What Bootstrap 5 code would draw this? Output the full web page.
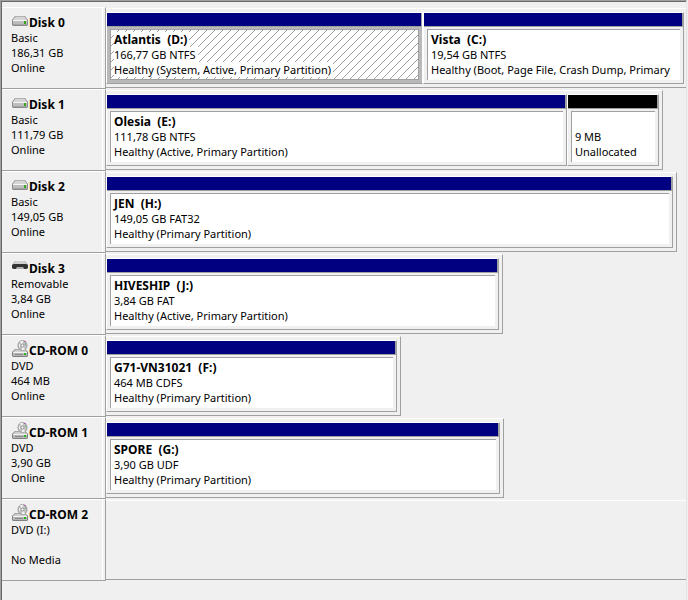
<!DOCTYPE html>
<html lang="en">
<head>
<meta charset="utf-8">
<meta name="viewport" content="width=device-width, initial-scale=1">
<title>Disk Management</title>
<link href="https://cdn.jsdelivr.net/npm/bootstrap@5.3.0/dist/css/bootstrap.min.css" rel="stylesheet">
<style>
  :root { --face: #f0f0f0; --shade: #a0a0a0; --navy: #000080; }
  body { background: var(--face); color: #000; font: 11px/15px "Noto Sans", "Open Sans", sans-serif; }
  .disk-view { border-top: 1px solid var(--shade); border-left: 1px solid var(--shade); border-right: 1px solid #e3e3e3; margin-right: 1px; }
  .disk-list { border-top: 1px solid #696969; border-left: 1px solid #696969; padding-top: 5px; }
  .disk-label { width: 104px; border-top: 1px solid #fff; border-bottom: 1px solid var(--shade); border-right: 1px solid var(--shade); padding-right: 2px; }
  .disk-face { border-right: 1px solid #fff; padding: 7px 0 13px 9px; min-height: 80px; }
  .disk-face h2, .part-body h3 { font-size: 12px; line-height: 15px; font-weight: 700; margin: 0; white-space: pre; }
  .disk-face svg { width: 18px; height: 18px; margin-top: -4px; flex: none; }
  .line { height: 15px; white-space: nowrap; }
  .disk-space { padding: 1px 0; min-width: 0; }
  .disk-panel { min-height: 80px; padding: 3px 3px 3px 0; border-top: 1px solid #fff; border-bottom: 1px solid var(--shade); border-right: 1px solid var(--shade); }
  .disk-panel.open-end { border-right: 0; padding-right: 2px; }
  .part { min-width: 0; flex-basis: 0; border: 1px solid var(--shade); border-top-color: #fff; border-left-color: #fff; }
  .part-bar { height: 14px; background: var(--navy); border-bottom: 1px solid var(--shade); border-right: 1px solid var(--shade); }
  .part-bar.free { background: #000; }
  .part-wrap { padding: 2px 3px 3px; }
  .part-body { border-top: 1px solid var(--shade); border-left: 1px solid var(--shade); background: #fff; padding: 2px 0 3px 3px; overflow: hidden; }
  .selected { border-right-color: #fff; }
  .selected .part-wrap { background: #b9b9b9; }
  .selected .part-body { border: 1px solid var(--shade); padding-bottom: 2px; background: #fff url("data:image/svg+xml,%3Csvg xmlns='http://www.w3.org/2000/svg' width='8' height='8' shape-rendering='crispEdges'%3E%3Cpath d='M0 7h1v1H0zM1 6h1v1H1zM2 5h1v1H2zM3 4h1v1H3zM4 3h1v1H4zM5 2h1v1H5zM6 1h1v1H6zM7 0h1v1H7z' fill='%23a0a0a0'/%3E%3C/svg%3E"); }
  .selected .part-body span { background: #fff; display: inline-block; padding-right: 2px; }
</style>
</head>
<body>
<svg class="d-none" aria-hidden="true">
  <symbol id="ic-disk" viewBox="0 0 18 18">
    <path d="M4 5h10l3 4v5l-1 1H2l-1-1V9z" fill="#8c8c8c"/>
    <path d="M4.500 5.500h9L16 9H2z" fill="#d6d6d6"/>
    <path d="M2 9h14v4.500H2z" fill="#bdbdbd"/>
    <path d="M2 9.500h14" stroke="#f6f6f6"/>
    <path d="M2 13.500h14" stroke="#a4a4a4"/>
    <path d="M13 10h2v3h-2z" fill="#39a61c"/>
  </symbol>
  <symbol id="ic-removable" viewBox="0 0 18 18">
    <path d="M4 4h10l3 4v3l-1 1H2l-1-1V8z" fill="#959595"/>
    <path d="M4.500 4h9L16 7H2z" fill="#cfcfcf"/>
    <path d="M1 8l2-1h12l2 1v3l-2 1h-2l-1-2H6l-1 2H3l-2-1z" fill="#333"/>
    <path d="M5 12l1-2h6l1 2z" fill="#b0b0b0"/>
  </symbol>
  <symbol id="ic-cd" viewBox="0 0 18 18">
    <path d="M4 10h10l3 3v4l-1 1H2l-1-1v-4z" fill="#808080"/>
    <path d="M4.500 10.500h9L16 13H2z" fill="#d0d0d0"/>
    <path d="M2 13h14v4H2z" fill="#b8b8b8"/>
    <path d="M2 13.500h14" stroke="#f0f0f0"/>
    <path d="M4 15.500h8" stroke="#888"/>
    <ellipse cx="11.500" cy="6.500" rx="4.500" ry="5" fill="#c4c4c4" stroke="#9a9a9a"/>
    <path d="M11.500 6.500L9 2.500l3-1zM11.500 6.500l2.500 4-3 1z" fill="#f4f4f4"/>
    <path d="M8.500 5v3" stroke="#eee"/>
    <ellipse cx="11.500" cy="6.500" rx="1.500" ry="1.500" fill="#fff" stroke="#8a8a8a"/>
    <path d="M13 2.500h2" stroke="#b065b0"/>
    <path d="M14.500 4v2" stroke="#84ac90"/>
    <path d="M13 14h2v2h-2z" fill="#24b71c"/>
  </symbol>
</svg>

<main class="disk-view min-vh-100 d-flex flex-column">
 <div class="disk-list flex-grow-1">

  <section class="d-flex">
    <div class="disk-label flex-shrink-0"><div class="disk-face">
      <div class="d-flex line"><svg aria-hidden="true"><use href="#ic-disk"/></svg><h2>Disk 0</h2></div>
      <div class="line">Basic</div><div class="line">186,31 GB</div><div class="line">Online</div>
    </div></div>
    <div class="disk-space flex-grow-1">
      <div class="disk-panel open-end d-flex">
        <div class="part selected" style="flex-grow:315"><div class="part-bar"></div><div class="part-wrap"><div class="part-body">
          <h3><span>Atlantis  (D:)</span></h3><div class="line"><span>166,77 GB NTFS</span></div><div class="line"><span>Healthy (System, Active, Primary Partition)</span></div>
        </div></div></div>
        <div class="part" style="flex-grow:259"><div class="part-bar"></div><div class="part-wrap"><div class="part-body">
          <h3>Vista  (C:)</h3><div class="line">19,54 GB NTFS</div><div class="line">Healthy (Boot, Page File, Crash Dump, Primary</div>
        </div></div></div>
      </div>
    </div>
  </section>

  <section class="d-flex">
    <div class="disk-label flex-shrink-0"><div class="disk-face">
      <div class="d-flex line"><svg aria-hidden="true"><use href="#ic-disk"/></svg><h2>Disk 1</h2></div>
      <div class="line">Basic</div><div class="line">111,79 GB</div><div class="line">Online</div>
    </div></div>
    <div class="disk-space flex-grow-1">
      <div class="disk-panel d-flex" style="width:96.03%">
        <div class="part" style="flex-grow:459"><div class="part-bar"></div><div class="part-wrap"><div class="part-body">
          <h3>Olesia  (E:)</h3><div class="line">111,78 GB NTFS</div><div class="line">Healthy (Active, Primary Partition)</div>
        </div></div></div>
        <div class="part" style="flex-grow:90"><div class="part-bar free"></div><div class="part-wrap"><div class="part-body">
          <div class="line"></div><div class="line">9 MB</div><div class="line">Unallocated</div>
        </div></div></div>
      </div>
    </div>
  </section>

  <section class="d-flex">
    <div class="disk-label flex-shrink-0"><div class="disk-face">
      <div class="d-flex line"><svg aria-hidden="true"><use href="#ic-disk"/></svg><h2>Disk 2</h2></div>
      <div class="line">Basic</div><div class="line">149,05 GB</div><div class="line">Online</div>
    </div></div>
    <div class="disk-space flex-grow-1">
      <div class="disk-panel d-flex" style="width:98.45%">
        <div class="part flex-grow-1"><div class="part-bar"></div><div class="part-wrap"><div class="part-body">
          <h3>JEN  (H:)</h3><div class="line">149,05 GB FAT32</div><div class="line">Healthy (Primary Partition)</div>
        </div></div></div>
      </div>
    </div>
  </section>

  <section class="d-flex">
    <div class="disk-label flex-shrink-0"><div class="disk-face">
      <div class="d-flex line"><svg aria-hidden="true"><use href="#ic-removable"/></svg><h2>Disk 3</h2></div>
      <div class="line">Removable</div><div class="line">3,84 GB</div><div class="line">Online</div>
    </div></div>
    <div class="disk-space flex-grow-1">
      <div class="disk-panel d-flex" style="width:68.45%">
        <div class="part flex-grow-1"><div class="part-bar"></div><div class="part-wrap"><div class="part-body">
          <h3>HIVESHIP  (J:)</h3><div class="line">3,84 GB FAT</div><div class="line">Healthy (Active, Primary Partition)</div>
        </div></div></div>
      </div>
    </div>
  </section>

  <section class="d-flex">
    <div class="disk-label flex-shrink-0"><div class="disk-face">
      <div class="d-flex line"><svg aria-hidden="true"><use href="#ic-cd"/></svg><h2>CD-ROM 0</h2></div>
      <div class="line">DVD</div><div class="line">464 MB</div><div class="line">Online</div>
    </div></div>
    <div class="disk-space flex-grow-1">
      <div class="disk-panel d-flex" style="width:50.86%">
        <div class="part flex-grow-1"><div class="part-bar"></div><div class="part-wrap"><div class="part-body">
          <h3>G71-VN31021  (F:)</h3><div class="line">464 MB CDFS</div><div class="line">Healthy (Primary Partition)</div>
        </div></div></div>
      </div>
    </div>
  </section>

  <section class="d-flex">
    <div class="disk-label flex-shrink-0"><div class="disk-face">
      <div class="d-flex line"><svg aria-hidden="true"><use href="#ic-cd"/></svg><h2>CD-ROM 1</h2></div>
      <div class="line">DVD</div><div class="line">3,90 GB</div><div class="line">Online</div>
    </div></div>
    <div class="disk-space flex-grow-1">
      <div class="disk-panel d-flex" style="width:68.62%">
        <div class="part flex-grow-1"><div class="part-bar"></div><div class="part-wrap"><div class="part-body">
          <h3>SPORE  (G:)</h3><div class="line">3,90 GB UDF</div><div class="line">Healthy (Primary Partition)</div>
        </div></div></div>
      </div>
    </div>
  </section>

  <section class="d-flex">
    <div class="disk-label flex-shrink-0"><div class="disk-face">
      <div class="d-flex line"><svg aria-hidden="true"><use href="#ic-cd"/></svg><h2>CD-ROM 2</h2></div>
      <div class="line">DVD (I:)</div><div class="line"></div><div class="line">No Media</div>
    </div></div>
    <div class="disk-space flex-grow-1"><div class="disk-panel open-end"></div></div>
  </section>

 </div>
</main>
<script src="https://cdn.jsdelivr.net/npm/bootstrap@5.3.0/dist/js/bootstrap.bundle.min.js"></script>
</body>
</html>
